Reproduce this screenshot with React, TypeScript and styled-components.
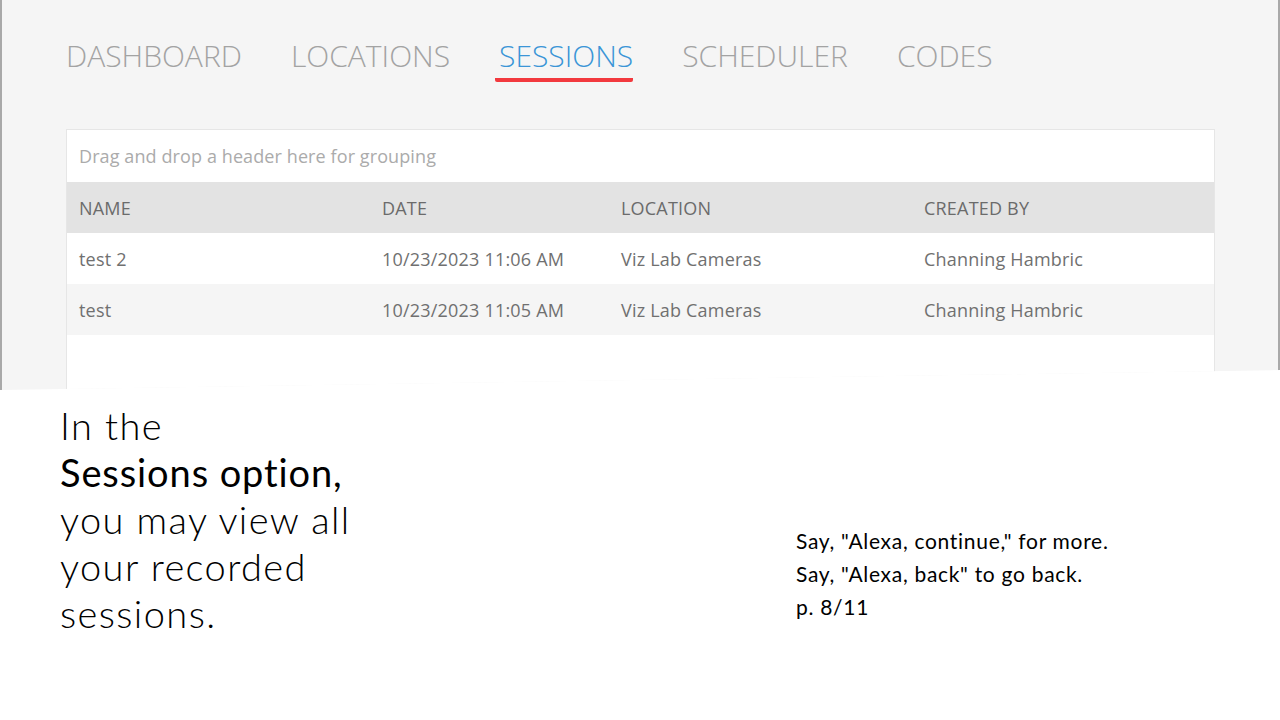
import React from "react";
import styled, { createGlobalStyle } from "styled-components";

const Global = createGlobalStyle`
  html, body { margin: 0; padding: 0; background: #ffffff; }
  body { width: 1280px; height: 720px; overflow: hidden; }
`;

const Slide = styled.div`
  width: 1280px;
  height: 720px;
  background: #ffffff;
  display: flex;
  flex-direction: column;
`;

const Shot = styled.section`
  height: 390px;
  box-sizing: border-box;
  background: #f5f5f5;
  border-left: 2px solid #a9a9a9;
  border-right: 2px solid #a9a9a9;
  padding: 38px 63px 0 64px;
  clip-path: polygon(0 0, 100% 0, 100% 370px, 0 390px);
  font-family: "Open Sans", "Noto Sans", sans-serif;
`;

const Tabs = styled.nav`
  display: flex;
  gap: 49px;
  height: 44px;
`;

const Tab = styled.div<{ $active?: boolean }>`
  font-size: 30px;
  font-weight: 300;
  line-height: 36px;
  color: ${(p) => (p.$active ? "#3b95d7" : "#a3a3a3")};
  padding: 0 0 4px ${(p) => (p.$active ? "4px" : "0")};
  margin-left: ${(p) => (p.$active ? "-4px" : "0")};
  border-bottom: 4px solid ${(p) => (p.$active ? "#f2393e" : "transparent")};
  border-radius: 0 0 2px 2px;
`;

const Grid = styled.div`
  margin-top: 47px;
  background: #ffffff;
  border: 1px solid #e6e6e6;
  border-bottom: none;
  height: 280px;
`;

const GroupBar = styled.div`
  height: 52px;
  display: flex;
  align-items: center;
  padding-left: 12px;
  font-size: 18px;
  color: #ababab;
  letter-spacing: 0.1px;
`;

const Row = styled.div<{ $kind: "head" | "even" | "odd" }>`
  display: grid;
  grid-template-columns: 303px 239px 303px 1fr;
  height: 51px;
  align-items: center;
  padding-left: 12px;
  font-size: 18px;
  letter-spacing: 0.2px;
  background: ${(p) =>
    p.$kind === "head" ? "#e3e3e3" : p.$kind === "odd" ? "#f5f5f5" : "#ffffff"};
  color: ${(p) => (p.$kind === "head" ? "#6b6b6b" : "#707070")};
`;

const Cell = styled.div`
  white-space: nowrap;
`;

const Body = styled.div`
  display: flex;
  padding: 12px 0 0 60px;
  font-family: Lato, "Open Sans", sans-serif;
  color: #000000;
`;

const Lead = styled.p`
  margin: 0;
  width: 340px;
  font-size: 38px;
  font-weight: 300;
  line-height: 47px;
  letter-spacing: 1.4px;
  white-space: nowrap;
`;

const Strong = styled.span`
  font-weight: 400;
  letter-spacing: 0.9px;
`;

const Hint = styled.div`
  margin: 122px 0 0 396px;
  font-size: 21px;
  line-height: 33px;
  letter-spacing: 0.7px;
`;

const rows = [
  ["test 2", "10/23/2023 11:06 AM", "Viz Lab Cameras", "Channing Hambric"],
  ["test", "10/23/2023 11:05 AM", "Viz Lab Cameras", "Channing Hambric"],
];

export default function App() {
  return (
    <Slide>
      <Global />
      <Shot>
        <Tabs>
          <Tab>DASHBOARD</Tab>
          <Tab>LOCATIONS</Tab>
          <Tab $active>SESSIONS</Tab>
          <Tab>SCHEDULER</Tab>
          <Tab>CODES</Tab>
        </Tabs>
        <Grid>
          <GroupBar>Drag and drop a header here for grouping</GroupBar>
          <Row $kind="head">
            <Cell>NAME</Cell>
            <Cell>DATE</Cell>
            <Cell>LOCATION</Cell>
            <Cell>CREATED BY</Cell>
          </Row>
          {rows.map((r, i) => (
            <Row key={i} $kind={i % 2 === 0 ? "even" : "odd"}>
              {r.map((c, j) => (
                <Cell key={j}>{c}</Cell>
              ))}
            </Row>
          ))}
        </Grid>
      </Shot>
      <Body>
        <Lead>
          In the
          <br />
          <Strong>Sessions option,</Strong>
          <br />
          you may view all
          <br />
          your recorded
          <br />
          sessions.
        </Lead>
        <Hint>
          Say, "Alexa, continue," for more.
          <br />
          Say, "Alexa, back" to go back.
          <br />
          p. 8/11
        </Hint>
      </Body>
    </Slide>
  );
}
